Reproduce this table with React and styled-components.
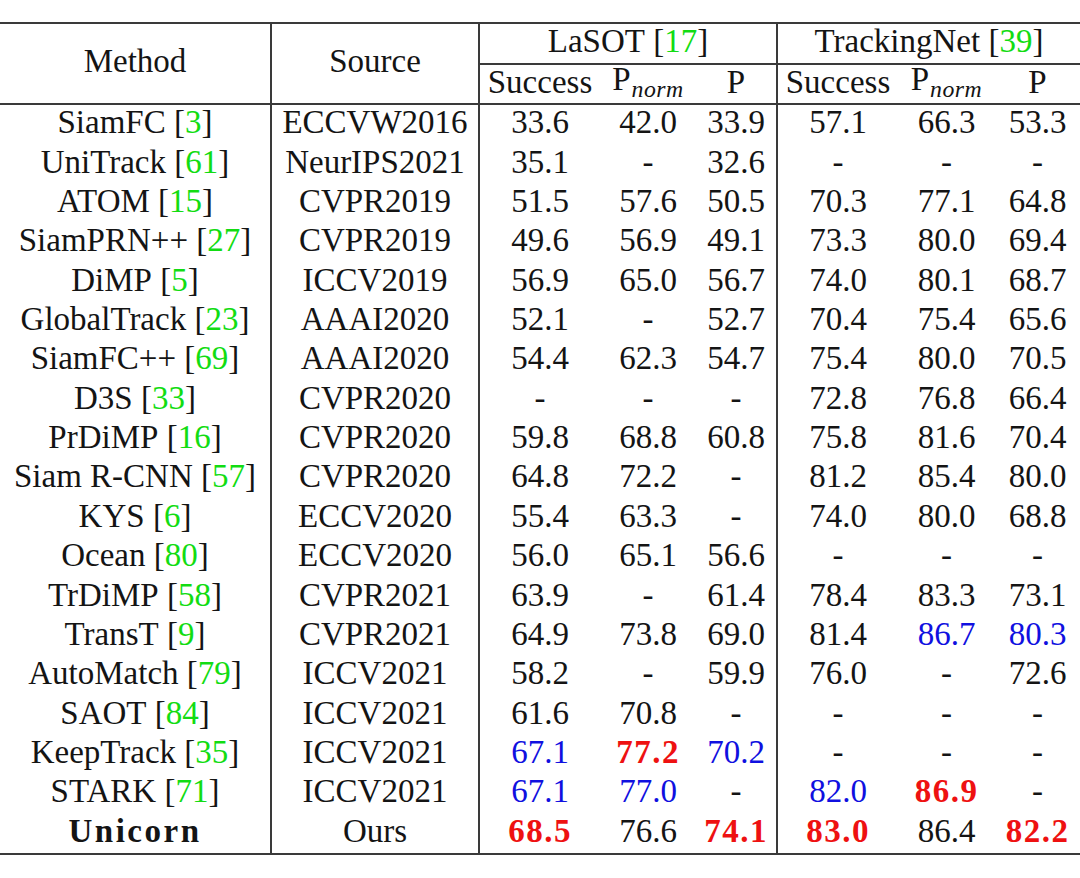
import React from 'react';
import styled, { createGlobalStyle } from 'styled-components';

const GlobalStyle = createGlobalStyle`
  html, body {
    margin: 0;
    padding: 0;
    background: #fff;
  }
  body {
    font-family: "Liberation Serif", "Times New Roman", serif;
    color: #141414;
  }
`;

const RULE = '#3a3a3a';

const Page = styled.div`
  width: 1080px;
  height: 878px;
  padding-top: 22px;
  box-sizing: border-box;
  overflow: hidden;
`;

const Table = styled.div`
  display: grid;
  grid-template-columns: 272px 208px 120px 96px 82px 120px 97px 85px;
  grid-template-rows: 41px 40px;
  grid-auto-rows: 39.37px;
  border-top: 2px solid ${RULE};
  border-bottom: 2px solid ${RULE};
  font-size: 33px;
`;

const Cell = styled.div`
  display: flex;
  align-items: center;
  justify-content: center;
  white-space: nowrap;
  box-sizing: border-box;
  padding-bottom: ${p => (p.$head ? '4px' : '4px')};
  border-right: ${p => (p.$rule ? `2px solid ${RULE}` : 'none')};
  border-bottom: ${p => (p.$under ? `2px solid ${RULE}` : 'none')};
  grid-row: ${p => p.$rowSpan ? `span ${p.$rowSpan}` : 'auto'};
  grid-column: ${p => p.$colSpan ? `span ${p.$colSpan}` : 'auto'};
  font-weight: ${p => (p.$bold ? 700 : 400)};
  letter-spacing: ${p => (p.$bold ? '2.5px' : 'normal')};
`;

const Cite = styled.span`
  color: #12dc12;
`;

const Value = styled.span`
  color: ${p => (p.$tone === 'r' ? '#ee1111' : p.$tone === 'b' ? '#1010e0' : 'inherit')};
  font-weight: ${p => (p.$tone === 'r' ? 700 : 400)};
  letter-spacing: ${p => (p.$tone === 'r' ? '1.5px' : 'normal')};
`;

const Sub = styled.sub`
  font-style: italic;
  font-size: 0.72em;
  vertical-align: -0.3em;
  margin-left: 1px;
  letter-spacing: 0.5px;
`;

const ROWS = [
  ['SiamFC', '3', 'ECCVW2016', ['33.6', '42.0', '33.9', '57.1', '66.3', '53.3']],
  ['UniTrack', '61', 'NeurIPS2021', ['35.1', '-', '32.6', '-', '-', '-']],
  ['ATOM', '15', 'CVPR2019', ['51.5', '57.6', '50.5', '70.3', '77.1', '64.8']],
  ['SiamPRN++', '27', 'CVPR2019', ['49.6', '56.9', '49.1', '73.3', '80.0', '69.4']],
  ['DiMP', '5', 'ICCV2019', ['56.9', '65.0', '56.7', '74.0', '80.1', '68.7']],
  ['GlobalTrack', '23', 'AAAI2020', ['52.1', '-', '52.7', '70.4', '75.4', '65.6']],
  ['SiamFC++', '69', 'AAAI2020', ['54.4', '62.3', '54.7', '75.4', '80.0', '70.5']],
  ['D3S', '33', 'CVPR2020', ['-', '-', '-', '72.8', '76.8', '66.4']],
  ['PrDiMP', '16', 'CVPR2020', ['59.8', '68.8', '60.8', '75.8', '81.6', '70.4']],
  ['Siam R-CNN', '57', 'CVPR2020', ['64.8', '72.2', '-', '81.2', '85.4', '80.0']],
  ['KYS', '6', 'ECCV2020', ['55.4', '63.3', '-', '74.0', '80.0', '68.8']],
  ['Ocean', '80', 'ECCV2020', ['56.0', '65.1', '56.6', '-', '-', '-']],
  ['TrDiMP', '58', 'CVPR2021', ['63.9', '-', '61.4', '78.4', '83.3', '73.1']],
  ['TransT', '9', 'CVPR2021', ['64.9', '73.8', '69.0', '81.4', '86.7:b', '80.3:b']],
  ['AutoMatch', '79', 'ICCV2021', ['58.2', '-', '59.9', '76.0', '-', '72.6']],
  ['SAOT', '84', 'ICCV2021', ['61.6', '70.8', '-', '-', '-', '-']],
  ['KeepTrack', '35', 'ICCV2021', ['67.1:b', '77.2:r', '70.2:b', '-', '-', '-']],
  ['STARK', '71', 'ICCV2021', ['67.1:b', '77.0:b', '-', '82.0:b', '86.9:r', '-']],
  ['Unicorn', null, 'Ours', ['68.5:r', '76.6', '74.1:r', '83.0:r', '86.4', '82.2:r']],
];

const Num = ({ raw }) => {
  const [text, tone] = raw.split(':');
  return <Value $tone={tone}>{text}</Value>;
};

const Pnorm = () => (
  <span>P<Sub>norm</Sub></span>
);

const App = () => (
  <Page>
    <GlobalStyle />
    <Table>
      <Cell $head $rowSpan={2} $rule $under>Method</Cell>
      <Cell $head $rowSpan={2} $rule $under>Source</Cell>
      <Cell $head $colSpan={3} $rule $under>LaSOT&nbsp;[<Cite>17</Cite>]</Cell>
      <Cell $head $colSpan={3} $under>TrackingNet&nbsp;[<Cite>39</Cite>]</Cell>

      <Cell $head $under>Success</Cell>
      <Cell $head $under><Pnorm /></Cell>
      <Cell $head $under $rule>P</Cell>
      <Cell $head $under>Success</Cell>
      <Cell $head $under><Pnorm /></Cell>
      <Cell $head $under>P</Cell>

      {ROWS.map(([name, cite, source, values]) => (
        <React.Fragment key={name}>
          <Cell $rule $bold={!cite}>
            {name}
            {cite && <>&nbsp;[<Cite>{cite}</Cite>]</>}
          </Cell>
          <Cell $rule>{source}</Cell>
          {values.map((v, i) => (
            <Cell key={i} $rule={i === 2}>
              <Num raw={v} />
            </Cell>
          ))}
        </React.Fragment>
      ))}
    </Table>
  </Page>
);

export default App;
